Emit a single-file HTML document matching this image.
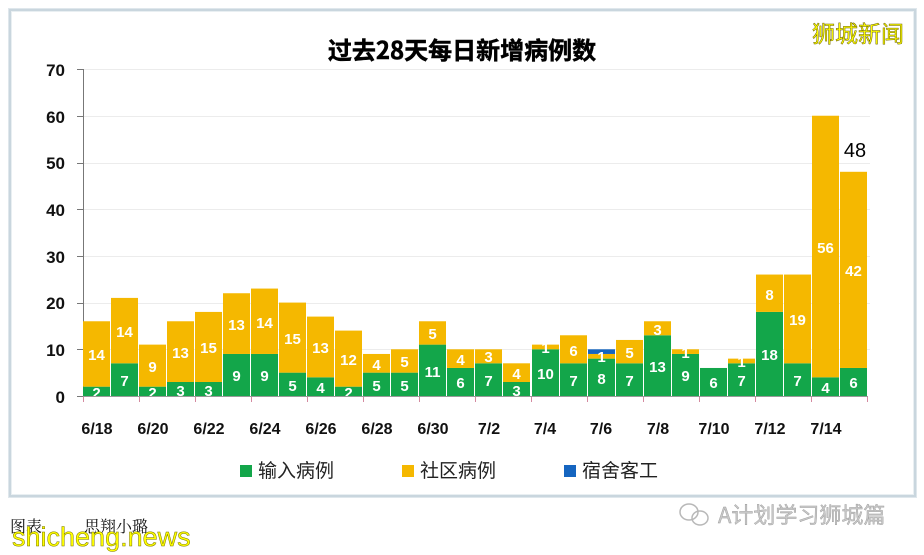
<!DOCTYPE html>
<html><head><meta charset="utf-8"><style>
body{margin:0;width:924px;height:555px;background:#fff;overflow:hidden;position:relative;font-family:"Liberation Sans","Noto Sans CJK SC",sans-serif}
.frame{position:absolute;left:9px;top:9px;width:903px;height:484px;border:2px solid #c9d6de;box-shadow:inset 0 0 0 1px #e9eff2, 0 0 0 1px #dfe7ec;}
svg{position:absolute;left:0;top:0}
.b{font-family:"Liberation Sans Narrow","Liberation Sans","Noto Sans CJK SC",sans-serif;font-weight:bold;}
</style></head><body>
<div class="frame"></div>
<svg width="924" height="555" viewBox="0 0 924 555">
<text x="462" y="59" text-anchor="middle" font-size="24" font-weight="bold" font-family="'Noto Sans CJK SC',sans-serif" fill="#000" stroke="#000" stroke-width="0.5">过去28天每日新增病例数</text>
<text x="858" y="42" text-anchor="middle" font-size="23" font-family="'Noto Sans CJK SC',sans-serif" fill="#ffff00" stroke="#6a6000" stroke-width="0.5">狮城新闻</text>
<g stroke="#ececec" stroke-width="1">
<line x1="84" x2="870" y1="69.5" y2="69.5"/><line x1="84" x2="870" y1="116.5" y2="116.5"/><line x1="84" x2="870" y1="163.5" y2="163.5"/><line x1="84" x2="870" y1="209.5" y2="209.5"/><line x1="84" x2="870" y1="256.5" y2="256.5"/><line x1="84" x2="870" y1="303.5" y2="303.5"/><line x1="84" x2="870" y1="349.5" y2="349.5"/>
</g>
<g stroke="#777" stroke-width="1">
<line x1="83.5" x2="83.5" y1="69" y2="396"/>
<line x1="77" x2="83" y1="69.5" y2="69.5"/><line x1="77" x2="83" y1="116.5" y2="116.5"/><line x1="77" x2="83" y1="163.5" y2="163.5"/><line x1="77" x2="83" y1="209.5" y2="209.5"/><line x1="77" x2="83" y1="256.5" y2="256.5"/><line x1="77" x2="83" y1="303.5" y2="303.5"/><line x1="77" x2="83" y1="349.5" y2="349.5"/><line x1="77" x2="83" y1="396.5" y2="396.5"/>
</g>
<g class="b" font-size="17" fill="#111" text-anchor="end">
<text x="65" y="76">70</text><text x="65" y="123">60</text><text x="65" y="169">50</text><text x="65" y="216">40</text><text x="65" y="263">30</text><text x="65" y="309">20</text><text x="65" y="356">10</text><text x="65" y="403">0</text>
</g>
<g transform="translate(0,396) scale(1,-4.671)">
<g fill="#13a64a">
<rect x="83" y="0" width="27" height="2"/><rect x="111" y="0" width="27" height="7"/><rect x="139" y="0" width="27" height="2"/><rect x="167" y="0" width="27" height="3"/><rect x="195" y="0" width="27" height="3"/><rect x="223" y="0" width="27" height="9"/><rect x="251" y="0" width="27" height="9"/><rect x="279" y="0" width="27" height="5"/><rect x="307" y="0" width="27" height="4"/><rect x="335" y="0" width="27" height="2"/><rect x="363" y="0" width="27" height="5"/><rect x="391" y="0" width="27" height="5"/><rect x="419" y="0" width="27" height="11"/><rect x="447" y="0" width="27" height="6"/><rect x="475" y="0" width="27" height="7"/><rect x="503" y="0" width="27" height="3"/><rect x="532" y="0" width="27" height="10"/><rect x="560" y="0" width="27" height="7"/><rect x="588" y="0" width="27" height="8"/><rect x="616" y="0" width="27" height="7"/><rect x="644" y="0" width="27" height="13"/><rect x="672" y="0" width="27" height="9"/><rect x="700" y="0" width="27" height="6"/><rect x="728" y="0" width="27" height="7"/><rect x="756" y="0" width="27" height="18"/><rect x="784" y="0" width="27" height="7"/><rect x="812" y="0" width="27" height="4"/><rect x="840" y="0" width="27" height="6"/>
</g>
<g fill="#f5b800">
<rect x="83" y="2" width="27" height="14"/><rect x="111" y="7" width="27" height="14"/><rect x="139" y="2" width="27" height="9"/><rect x="167" y="3" width="27" height="13"/><rect x="195" y="3" width="27" height="15"/><rect x="223" y="9" width="27" height="13"/><rect x="251" y="9" width="27" height="14"/><rect x="279" y="5" width="27" height="15"/><rect x="307" y="4" width="27" height="13"/><rect x="335" y="2" width="27" height="12"/><rect x="363" y="5" width="27" height="4"/><rect x="391" y="5" width="27" height="5"/><rect x="419" y="11" width="27" height="5"/><rect x="447" y="6" width="27" height="4"/><rect x="475" y="7" width="27" height="3"/><rect x="503" y="3" width="27" height="4"/><rect x="532" y="10" width="27" height="1"/><rect x="560" y="7" width="27" height="6"/><rect x="588" y="8" width="27" height="1"/><rect x="616" y="7" width="27" height="5"/><rect x="644" y="13" width="27" height="3"/><rect x="672" y="9" width="27" height="1"/><rect x="728" y="7" width="27" height="1"/><rect x="756" y="18" width="27" height="8"/><rect x="784" y="7" width="27" height="19"/><rect x="812" y="4" width="27" height="56"/><rect x="840" y="6" width="27" height="42"/>
</g>
<rect x="588" y="9" width="27" height="1" fill="#1565c0"/>
</g>
<g class="b" font-size="15" fill="#fff" text-anchor="middle">
<text x="96.5" y="398">2</text><text x="96.5" y="360">14</text>
<text x="124.5" y="386">7</text><text x="124.5" y="337">14</text>
<text x="152.5" y="398">2</text><text x="152.5" y="372">9</text>
<text x="180.5" y="396">3</text><text x="180.5" y="358">13</text>
<text x="208.5" y="396">3</text><text x="208.5" y="353">15</text>
<text x="236.5" y="381">9</text><text x="236.5" y="330">13</text>
<text x="264.5" y="381">9</text><text x="264.5" y="328">14</text>
<text x="292.5" y="391">5</text><text x="292.5" y="344">15</text>
<text x="320.5" y="393">4</text><text x="320.5" y="353">13</text>
<text x="348.5" y="398">2</text><text x="348.5" y="365">12</text>
<text x="376.5" y="391">5</text><text x="376.5" y="370">4</text>
<text x="404.5" y="391">5</text><text x="404.5" y="367">5</text>
<text x="432.5" y="377">11</text><text x="432.5" y="339">5</text>
<text x="460.5" y="388">6</text><text x="460.5" y="365">4</text>
<text x="488.5" y="386">7</text><text x="488.5" y="362">3</text>
<text x="516.5" y="396">3</text><text x="516.5" y="379">4</text>
<text x="545.5" y="379">10</text><text x="545.5" y="353">1</text>
<text x="573.5" y="386">7</text><text x="573.5" y="356">6</text>
<text x="601.5" y="384">8</text><text x="601.5" y="362">1</text>
<text x="629.5" y="386">7</text><text x="629.5" y="358">5</text>
<text x="657.5" y="372">13</text><text x="657.5" y="335">3</text>
<text x="685.5" y="381">9</text><text x="685.5" y="358">1</text>
<text x="713.5" y="388">6</text>
<text x="741.5" y="386">7</text><text x="741.5" y="367">1</text>
<text x="769.5" y="360">18</text><text x="769.5" y="300">8</text>
<text x="797.5" y="386">7</text><text x="797.5" y="325">19</text>
<text x="825.5" y="393">4</text><text x="825.5" y="253">56</text>
<text x="853.5" y="388">6</text><text x="853.5" y="276">42</text>
</g>
<text x="855" y="157" text-anchor="middle" font-size="20" fill="#000">48</text>
<g stroke="#d48aa0" stroke-width="1">
<line x1="83.5" x2="83.5" y1="396" y2="402"/><line x1="139.5" x2="139.5" y1="396" y2="402"/><line x1="195.5" x2="195.5" y1="396" y2="402"/><line x1="251.5" x2="251.5" y1="396" y2="402"/><line x1="307.5" x2="307.5" y1="396" y2="402"/><line x1="363.5" x2="363.5" y1="396" y2="402"/><line x1="419.5" x2="419.5" y1="396" y2="402"/><line x1="475.5" x2="475.5" y1="396" y2="402"/><line x1="531.5" x2="531.5" y1="396" y2="402"/><line x1="587.5" x2="587.5" y1="396" y2="402"/><line x1="643.5" x2="643.5" y1="396" y2="402"/><line x1="699.5" x2="699.5" y1="396" y2="402"/><line x1="755.5" x2="755.5" y1="396" y2="402"/><line x1="811.5" x2="811.5" y1="396" y2="402"/><line x1="867.5" x2="867.5" y1="396" y2="402"/>
</g>
<line x1="83" x2="868" y1="396.5" y2="396.5" stroke="#999"/>
<g class="b" font-size="16" fill="#111" text-anchor="middle">
<text x="97" y="434">6/18</text><text x="153" y="434">6/20</text><text x="209" y="434">6/22</text><text x="265" y="434">6/24</text><text x="321" y="434">6/26</text><text x="377" y="434">6/28</text><text x="433" y="434">6/30</text><text x="489" y="434">7/2</text><text x="545" y="434">7/4</text><text x="601" y="434">7/6</text><text x="658" y="434">7/8</text><text x="714" y="434">7/10</text><text x="770" y="434">7/12</text><text x="826" y="434">7/14</text>
</g>
<rect x="240" y="465" width="12" height="12" fill="#13a64a"/>
<text x="258" y="477" font-size="19" fill="#222" font-family="'Noto Sans CJK SC',sans-serif">输入病例</text>
<rect x="402" y="465" width="12" height="12" fill="#f5b800"/>
<text x="420" y="477" font-size="19" fill="#222" font-family="'Noto Sans CJK SC',sans-serif">社区病例</text>
<rect x="564" y="465" width="12" height="12" fill="#1565c0"/>
<text x="582" y="477" font-size="19" fill="#222" font-family="'Noto Sans CJK SC',sans-serif">宿舍客工</text>
<text x="10" y="532" font-size="16" fill="#111" font-family="'Noto Serif CJK SC',serif">图表</text>
<text x="84" y="532" font-size="16" fill="#111" font-family="'Noto Serif CJK SC',serif">思翔小璐</text>
<text x="12" y="546" font-size="27" fill="#ffff00" stroke="#7a7600" stroke-width="0.5">shicheng.news</text>
<g fill="none" stroke="#b8b8b8" stroke-width="1.5">
<ellipse cx="689" cy="512" rx="9" ry="8"/><ellipse cx="700" cy="518" rx="8" ry="7"/>
</g>
<text x="718" y="523" font-size="22" fill="#c8c8c8" stroke="#9a9a9a" stroke-width="0.4" font-family="'Noto Sans CJK SC',sans-serif">A计划学习狮城篇</text>
</svg>
</body></html>
